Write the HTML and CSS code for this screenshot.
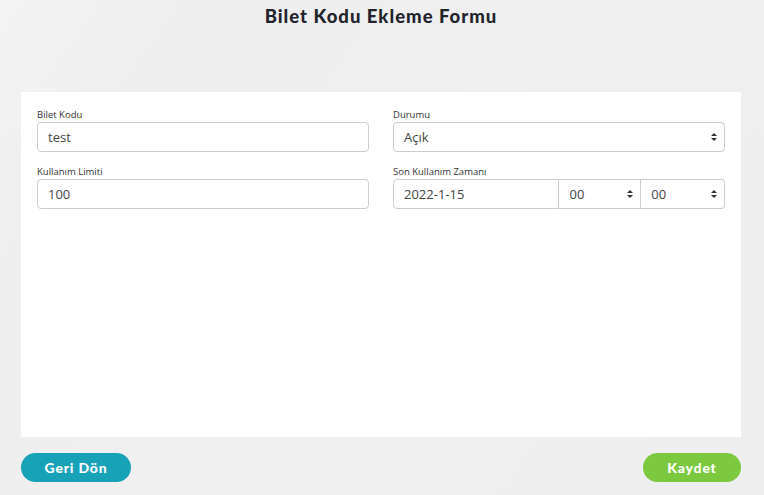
FILE: index.html
```html
<!DOCTYPE html>
<html lang="tr">
<head>
<meta charset="utf-8">
<title>Bilet Kodu Ekleme Formu</title>
<link rel="stylesheet" href="styles.css">
</head>
<body>
<div class="page">
  <h1 class="title">Bilet Kodu Ekleme Formu</h1>
  <div class="panel">
    <div class="grid">
      <div class="field">
        <label class="label">Bilet Kodu</label>
        <div class="control">test</div>
      </div>
      <div class="field">
        <label class="label">Durumu</label>
        <div class="control select">Açık<span class="caret"></span></div>
      </div>
      <div class="field">
        <label class="label">Kullanım Limiti</label>
        <div class="control">100</div>
      </div>
      <div class="field">
        <label class="label">Son Kullanım Zamanı</label>
        <div class="group">
          <div class="control g-date">2022-1-15</div>
          <div class="control select g-sel">00<span class="caret"></span></div>
          <div class="control select g-sel g-last">00<span class="caret"></span></div>
        </div>
      </div>
    </div>
  </div>
  <div class="actions">
    <button class="btn btn-back">Geri Dön</button>
    <button class="btn btn-save">Kaydet</button>
  </div>
</div>
</body>
</html>
```
FILE: styles.css
```css
html, body {
  margin: 0;
  padding: 0;
}
body {
  width: 764px;
  height: 495px;
  overflow: hidden;
  background: linear-gradient(125deg, #f3f3f3 0%, #eeeeee 20%, #f0f0f0 50%, #eeeeee 100%);
  font-family: "Open Sans", "Liberation Sans", sans-serif;
  color: #333;
}
.page {
  padding: 0 23px 0 21px;
}
.title {
  margin: 0;
  height: 92px;
  padding-top: 5px;
  box-sizing: border-box;
  text-align: center;
  font-family: Lato, "DejaVu Sans", sans-serif;
  font-weight: 900;
  font-size: 18.5px;
  letter-spacing: 1px;
  color: #22232b;
}
.panel {
  background: #fff;
  height: 345px;
  padding: 17px 16px 0 16px;
  box-sizing: border-box;
}
.grid {
  display: grid;
  grid-template-columns: 332px 332px;
  column-gap: 24px;
  row-gap: 14px;
}
.label {
  display: block;
  font-size: 9.5px;
  line-height: 12px;
  color: #333;
  margin-bottom: 1px;
  margin-left: 0;
}
.control {
  height: 30px;
  box-sizing: border-box;
  border: 1px solid #ccc;
  border-radius: 4px;
  padding: 0 10px;
  font-size: 13px;
  line-height: 28px;
  color: #444;
  position: relative;
  background: #fff;
}
.caret {
  position: absolute;
  right: 10px;
  top: 10px;
  width: 0;
  height: 8px;
}
.caret::before, .caret::after {
  content: "";
  position: absolute;
  left: -3px;
  border-left: 3px solid transparent;
  border-right: 3px solid transparent;
}
.caret::before {
  top: 0;
  border-bottom: 3px solid #333;
}
.caret::after {
  top: 5px;
  border-top: 3px solid #333;
}
.group {
  display: flex;
}
.g-date {
  width: 167px;
  border-radius: 4px 0 0 4px;
}
.g-sel {
  width: 82px;
  border-left: none;
  border-radius: 0;
}
.g-last {
  width: 84px;
  border-radius: 0 4px 4px 0;
}
.actions {
  display: flex;
  justify-content: space-between;
  margin-top: 16px;
}
.btn {
  border: none;
  height: 29px;
  border-radius: 15px;
  color: #fff;
  font-family: Lato, "DejaVu Sans", sans-serif;
  font-weight: 900;
  font-size: 14px;
  letter-spacing: 0.8px;
  padding: 0;
}
.btn-back {
  width: 110px;
  background: #17a2b8;
}
.btn-save {
  width: 98px;
  background: #7cc940;
}
```
